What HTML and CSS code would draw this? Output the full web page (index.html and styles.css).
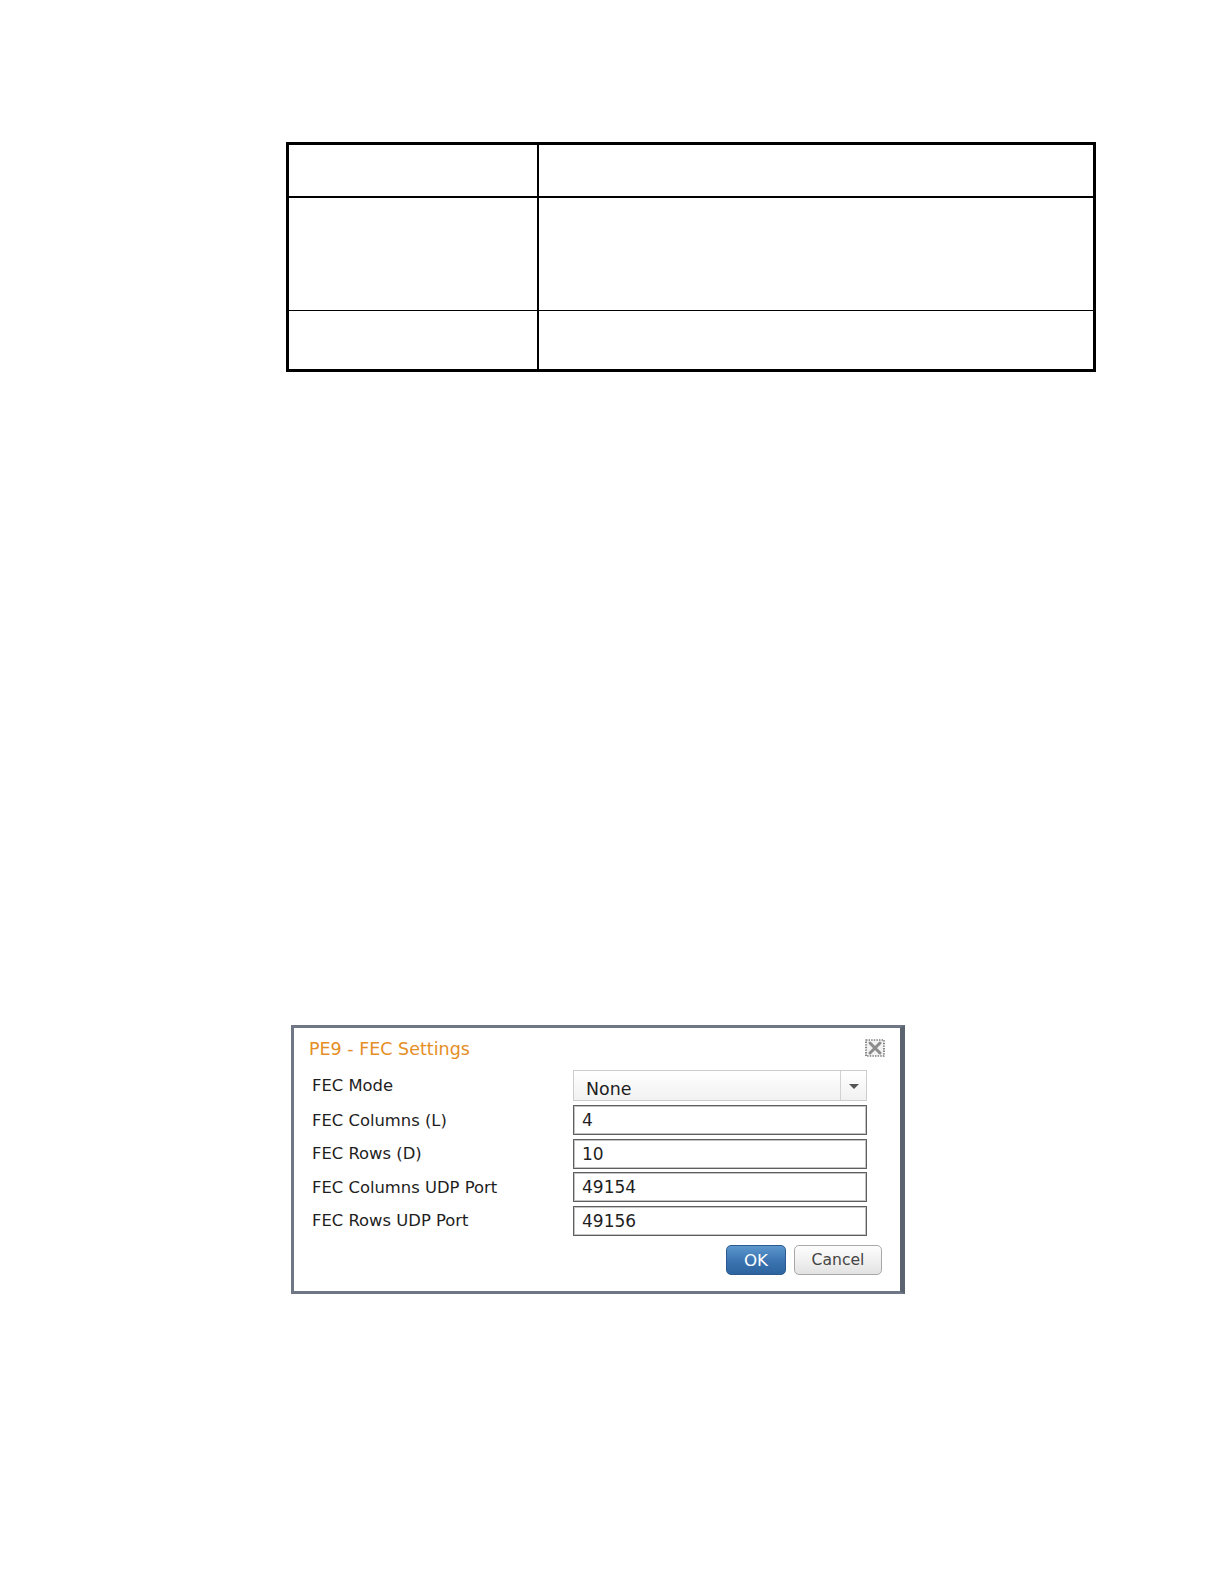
FILE: index.html
```html
<!DOCTYPE html>
<html>
<head>
<meta charset="utf-8">
<title>FEC Settings</title>
<link rel="stylesheet" href="styles.css">
</head>
<body>
<div class="page">
  <div class="grid-table">
    <div class="cell c1 r1"></div>
    <div class="cell c2 r1"></div>
    <div class="cell c1 r2"></div>
    <div class="cell c2 r2"></div>
    <div class="cell c1 r3"></div>
    <div class="cell c2 r3"></div>
  </div>

  <div class="dialog">
    <div class="dlg-head">
      <span class="dlg-title">PE9 - FEC Settings</span>
      <svg class="dlg-close" width="20" height="18" viewBox="0 0 20 18">
        <rect x="1" y="1" width="18" height="16" fill="#f2f2f2" stroke="#3a3a3a" stroke-width="1.2" stroke-dasharray="1.4 1.2"/>
        <path d="M5 4 L15 14 M15 4 L5 14" stroke="#8c8c8c" stroke-width="3" stroke-linecap="round"/>
      </svg>
    </div>
    <div class="dlg-body">
      <div class="row row-select">
        <span class="label">FEC Mode</span>
        <div class="select">
          <span class="select-text">None</span>
          <span class="select-btn"><span class="arrow"></span></span>
        </div>
      </div>
      <div class="row">
        <span class="label">FEC Columns (L)</span>
        <div class="field">4</div>
      </div>
      <div class="row">
        <span class="label">FEC Rows (D)</span>
        <div class="field">10</div>
      </div>
      <div class="row">
        <span class="label">FEC Columns UDP Port</span>
        <div class="field">49154</div>
      </div>
      <div class="row">
        <span class="label">FEC Rows UDP Port</span>
        <div class="field">49156</div>
      </div>
      <div class="buttons">
        <button class="btn btn-ok">OK</button>
        <button class="btn btn-cancel">Cancel</button>
      </div>
    </div>
  </div>
</div>
</body>
</html>
```

FILE: styles.css
```css
html, body {
  margin: 0;
  padding: 0;
  background: #ffffff;
}

.page {
  width: 1225px;
  min-height: 1584px;
  padding-top: 142px;
  box-sizing: border-box;
}

/* empty reference table */
.grid-table {
  margin-left: 286px;
  width: 810px;
  height: 230px;
  box-sizing: border-box;
  border: 3px solid #000;
  display: grid;
  grid-template-columns: 248px 1fr;
  grid-template-rows: 53px 113px 58px;
}

.cell {
  box-sizing: border-box;
}

.c2 {
  border-left: 2px solid #000;
}

.r1 {
  border-bottom: 2px solid #000;
}

.r2 {
  border-bottom: 1px solid #000;
}

/* dialog screenshot */
.dialog {
  margin-top: 653px;
  margin-left: 291px;
  width: 614px;
  height: 269px;
  box-sizing: border-box;
  border: 3px solid #6f7786;
  border-right: 5px solid #5b6270;
  background: #ffffff;
  font-family: "DejaVu Sans", Verdana, sans-serif;
  color: #1e1e1e;
}

.dlg-head {
  height: 42px;
  display: flex;
  align-items: center;
  justify-content: space-between;
  padding: 0 15px 0 15px;
}

.dlg-title {
  font-size: 17.5px;
  color: #e58e25;
}

.dlg-close {
  display: block;
  margin-top: -3px;
}

.dlg-body {
  display: flex;
  flex-direction: column;
  gap: 3.5px;
}

.row {
  display: flex;
  align-items: center;
  height: 30px;
}

.row-select {
  height: 31px;
  margin-bottom: 0.5px;
}

.label {
  width: 279px;
  box-sizing: border-box;
  padding-left: 18px;
  font-size: 16.4px;
}

.field {
  width: 294px;
  height: 30px;
  box-sizing: border-box;
  border: 1px solid #5e5e5e;
  box-shadow: inset 0 0 0 1px #c4c4c4;
  padding-left: 8px;
  font-size: 17px;
  line-height: 28px;
  background: #fff;
}

.select {
  width: 294px;
  height: 31px;
  box-sizing: border-box;
  border: 1px solid #cdcdcd;
  background: linear-gradient(#ffffff, #f1f1f1);
  display: flex;
  align-items: stretch;
}

.select-text {
  flex: 1;
  padding-left: 12px;
  padding-top: 5px;
  font-size: 17.4px;
  line-height: 27px;
}

.select-btn {
  width: 25px;
  border-left: 1px solid #d2d2d2;
  display: flex;
  align-items: center;
  justify-content: center;
}

.arrow {
  width: 0;
  height: 0;
  border-left: 5px solid transparent;
  border-right: 5px solid transparent;
  border-top: 5px solid #555;
  margin-top: 1px;
}

.buttons {
  display: flex;
  justify-content: flex-end;
  gap: 8px;
  padding-right: 18px;
  margin-top: 6px;
}

.btn {
  height: 30px;
  box-sizing: border-box;
  border-radius: 5px;
  font-family: "DejaVu Sans", Verdana, sans-serif;
  padding: 0;
  line-height: 28px;
}

.btn-ok {
  width: 60px;
  font-size: 16.7px;
  color: #ffffff;
  border: 1px solid #2b5b90;
  background: linear-gradient(#5d97cd, #3a73b0 55%, #2d64a0);
}

.btn-cancel {
  width: 88px;
  font-size: 15.6px;
  color: #454545;
  border: 1px solid #a8a8a8;
  background: linear-gradient(#fdfdfd, #f1f1f1 50%, #e2e2e2);
}
```
